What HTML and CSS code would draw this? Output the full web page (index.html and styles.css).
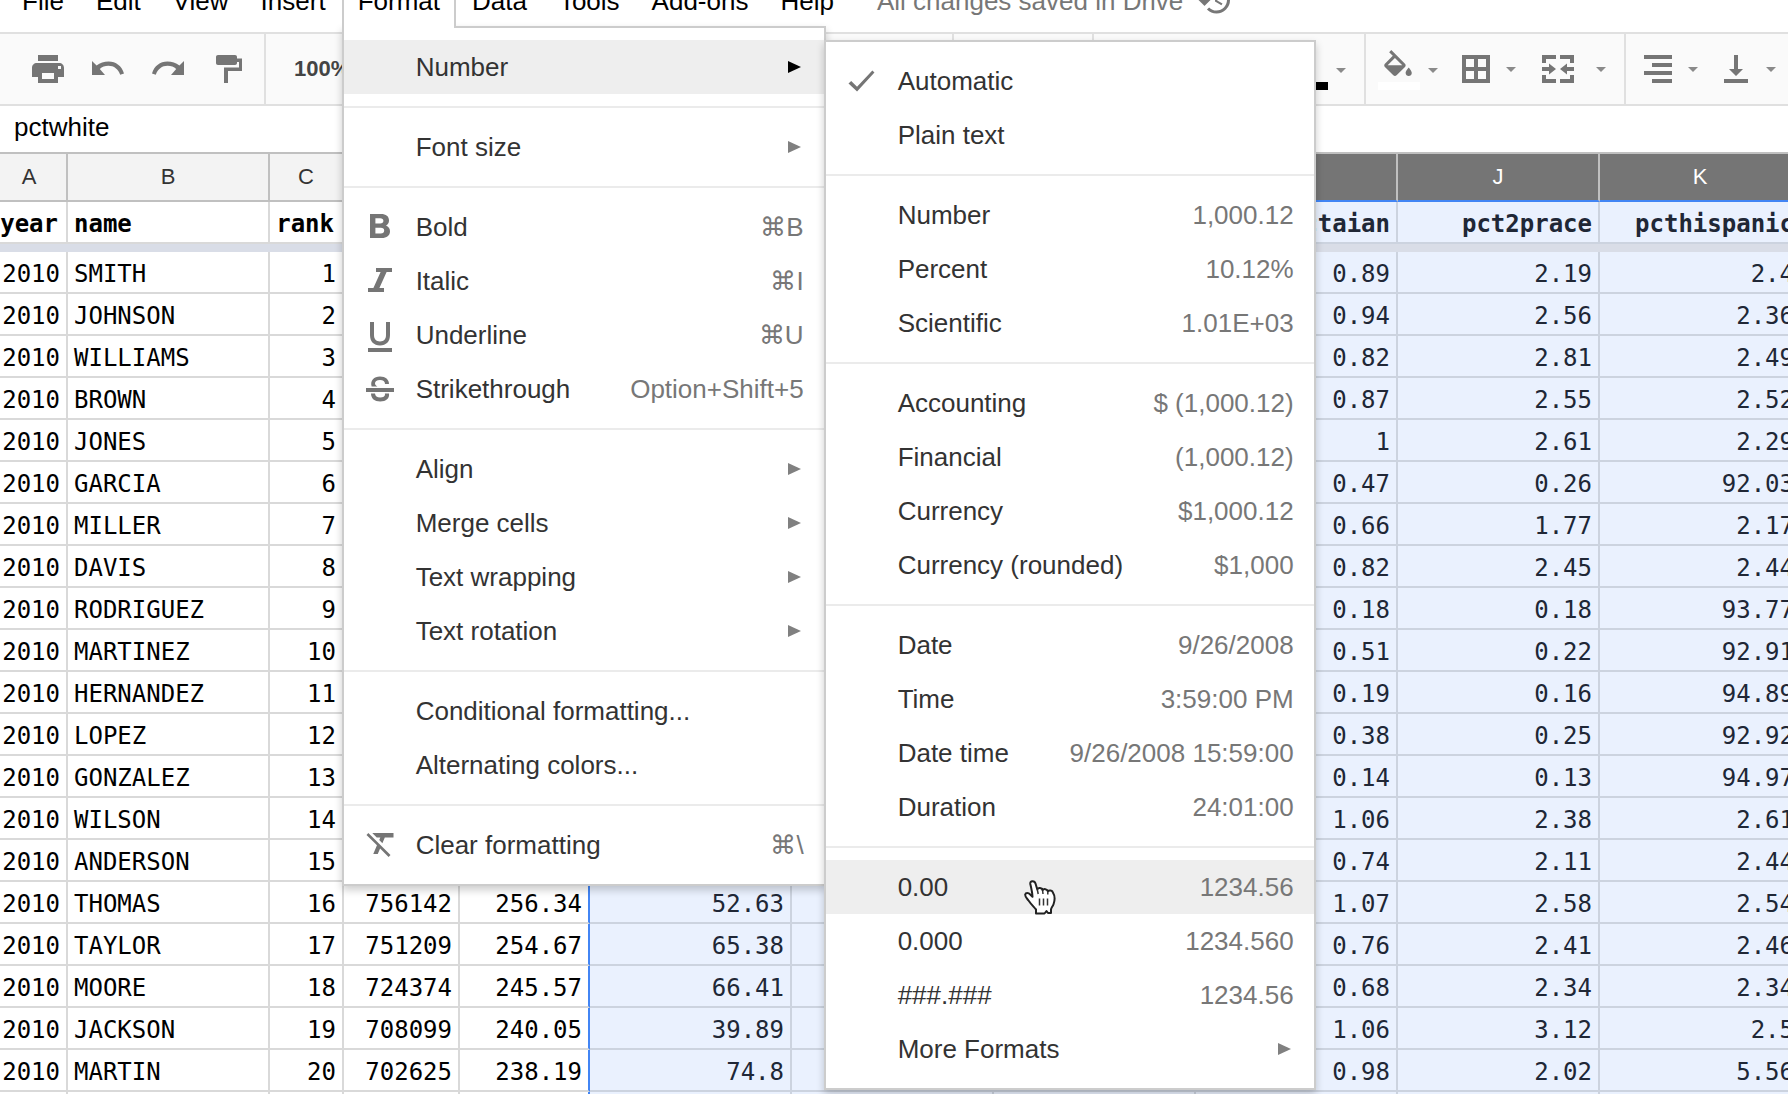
FILE: index.html
```html
<!DOCTYPE html>
<html lang="en">
<head>
<meta charset="utf-8">
<title>Spreadsheet</title>
<link rel="stylesheet" href="styles.css">
</head>
<body>
<div class="app">
  <nav class="menubar">
    <button class="menubar-item">File</button>
    <button class="menubar-item">Edit</button>
    <button class="menubar-item">View</button>
    <button class="menubar-item">Insert</button>
    <div class="menubar-open">
      <button class="menubar-item menubar-tab">Format</button>
      <ul class="menu menu-format">
        <li class="menu-row">
          <button class="item item-active"><span class="label">Number</span><span class="arrow"></span></button>
          <ul class="menu menu-number">
            <li><button class="item"><svg class="icon" viewBox="0 0 24 24"><path d="M8.700 15.800 4.800 12l-1.800 1.600 5.700 5.400L20.300 6.300 18.900 5z"/></svg><span class="label">Automatic</span></button></li>
            <li><button class="item"><span class="label">Plain text</span></button></li>
            <li class="rule"></li>
            <li><button class="item"><span class="label">Number</span><span class="hint">1,000.12</span></button></li>
            <li><button class="item"><span class="label">Percent</span><span class="hint">10.12%</span></button></li>
            <li><button class="item"><span class="label">Scientific</span><span class="hint">1.01E+03</span></button></li>
            <li class="rule"></li>
            <li><button class="item"><span class="label">Accounting</span><span class="hint">$ (1,000.12)</span></button></li>
            <li><button class="item"><span class="label">Financial</span><span class="hint">(1,000.12)</span></button></li>
            <li><button class="item"><span class="label">Currency</span><span class="hint">$1,000.12</span></button></li>
            <li><button class="item"><span class="label">Currency (rounded)</span><span class="hint">$1,000</span></button></li>
            <li class="rule"></li>
            <li><button class="item"><span class="label">Date</span><span class="hint">9/26/2008</span></button></li>
            <li><button class="item"><span class="label">Time</span><span class="hint">3:59:00 PM</span></button></li>
            <li><button class="item"><span class="label">Date time</span><span class="hint">9/26/2008 15:59:00</span></button></li>
            <li><button class="item"><span class="label">Duration</span><span class="hint">24:01:00</span></button></li>
            <li class="rule"></li>
            <li class="menu-row"><button class="item item-active"><span class="label">0.00</span><span class="hint">1234.56</span></button>
              <svg class="pointer" viewBox="0 0 32 35"><path d="M12 33.500v-4C9 26 6.500 23.500 4.500 20.500 2.500 18 .8 16.500 1.200 14.500c.5-2 3.300-2 5 0l2.300 2.300C8.300 12 7 7 6.300 4 5.800.5 10.500.2 11.500 3.500l1.800 6c.7-2 4.700-2 5.300.8.9-1.800 4.700-1.600 5.200 1 1.200-1.500 4.800-1 5.200 1.500 2 3 1.600 8.200.6 11.200-.8 2.500-2.300 3.500-2.600 5.500v3.500h-3l-1.500-2-2 2.500H12z" fill="#fff" stroke="#222" stroke-width="2" stroke-linejoin="round"/><path d="M13.300 9.500l.9 4.500M18.600 10.500l.4 3.500M23.800 11.500v3M15.500 18.500v7M19.500 18.500v7M23.500 18.500v7" fill="none" stroke="#333" stroke-width="1.500"/></svg></li>
            <li><button class="item"><span class="label">0.000</span><span class="hint">1234.560</span></button></li>
            <li><button class="item"><span class="label">###.###</span><span class="hint">1234.56</span></button></li>
            <li><button class="item"><span class="label">More Formats</span><span class="arrow"></span></button></li>
          </ul>
        </li>
        <li class="rule"></li>
        <li><button class="item"><span class="label">Font size</span><span class="arrow"></span></button></li>
        <li class="rule"></li>
        <li><button class="item"><svg class="icon" viewBox="0 -0.5 18 18"><path fill-rule="evenodd" d="M4 2h5.500C12 2 13.500 3.200 13.500 5.200c0 1.200-.6 2-1.500 2.500 1.200.5 2 1.500 2 2.900C14 12.800 12.300 14 9.900 14H4zM6.700 4.100v2.700h2.400c1 0 1.600-.5 1.600-1.400s-.6-1.300-1.600-1.300zM6.700 8.900v2.900h2.700c1.100 0 1.700-.5 1.700-1.500s-.6-1.400-1.700-1.400z"/></svg><span class="label">Bold</span><span class="hint">⌘B</span></button></li>
        <li><button class="item"><svg class="icon" viewBox="0 -0.5 18 18"><path d="M7 2h8v2h-2.700L8.700 12H11v2H3v-2h2.700L9.300 4H7z"/></svg><span class="label">Italic</span><span class="hint">⌘I</span></button></li>
        <li><button class="item"><svg class="icon" viewBox="0 -0.5 18 18"><path d="M4 2h2v6.500c0 2 1 3.200 3 3.200s3-1.200 3-3.200V2h2v6.500c0 3.300-1.900 5.200-5 5.200s-5-1.900-5-5.200zM3 15h12v2H3z"/></svg><span class="label">Underline</span><span class="hint">⌘U</span></button></li>
        <li><button class="item"><svg class="icon" viewBox="0 -0.5 18 18"><path d="M2 8h14v2H2z"/><path d="M4.800 7.200C4 4.300 6 2.300 9 2.300c2.800 0 4.500 1.500 4.500 3.700h-2c0-1.200-.9-2-2.500-2-1.700 0-2.500.7-2.500 1.600 0 .7.400 1.200 1.200 1.600zM4.500 10.700h2c.1 1.300 1 2 2.600 2 1.500 0 2.400-.6 2.400-1.500 0-.2 0-.4-.1-.5h2.100c.4 2.400-1.500 4-4.400 4-2.800 0-4.600-1.500-4.600-4z"/></svg><span class="label">Strikethrough</span><span class="hint">Option+Shift+5</span></button></li>
        <li class="rule"></li>
        <li><button class="item"><span class="label">Align</span><span class="arrow"></span></button></li>
        <li><button class="item"><span class="label">Merge cells</span><span class="arrow"></span></button></li>
        <li><button class="item"><span class="label">Text wrapping</span><span class="arrow"></span></button></li>
        <li><button class="item"><span class="label">Text rotation</span><span class="arrow"></span></button></li>
        <li class="rule"></li>
        <li><button class="item"><span class="label">Conditional formatting...</span></button></li>
        <li><button class="item"><span class="label">Alternating colors...</span></button></li>
        <li class="rule"></li>
        <li><button class="item"><svg class="icon" viewBox="-1 1 24 24"><path d="M3.270 5L2 6.270l6.970 6.970L6.500 19h3l1.570-3.660L16.730 21 18 19.730 3.550 5.270 3.270 5zM6 5v.18L8.820 8h2.400l-.72 1.680 2.100 2.100L14.210 8H20V5H6z"/></svg><span class="label">Clear formatting</span><span class="hint">⌘\</span></button></li>
      </ul>
    </div>
    <button class="menubar-item">Data</button>
    <button class="menubar-item">Tools</button>
    <button class="menubar-item">Add-ons</button>
    <button class="menubar-item">Help</button>
    <span class="save-state">All changes saved in Drive</span>
    <svg class="history" viewBox="0 0 24 24"><path d="M13 3a9 9 0 0 0-9 9H1l3.890 3.890.07.14L9 12H6c0-3.870 3.130-7 7-7s7 3.130 7 7-3.130 7-7 7c-1.930 0-3.680-.79-4.940-2.060l-1.420 1.420A8.950 8.950 0 0 0 13 21a9 9 0 1 0 0-18zm-1 5v5l4.280 2.540.72-1.210-3.500-2.080V8z"/></svg>
  </nav>

  <div class="toolbar">
    <div class="group group-main">
      <button class="tool" aria-label="Print"><svg class="icon" viewBox="0 0 18 18"><path fill-rule="evenodd" d="M4 2h10v3H4zM3.500 6h11C16 6 17 7 17 8.500V13h-3v3H4v-3H1V8.500C1 7 2 6 3.500 6zM6 11v3h6v-3zM14 7.500v1.500h1.500V7.500z"/></svg></button>
      <button class="tool" aria-label="Undo"><svg class="icon" viewBox="0 0 18 18"><path d="M1 5l2.300 2.300C5 6.100 7 5.300 9.300 5.300c3.700 0 6.500 2.200 7.700 5.900l-1.900.7c-.9-2.800-3.100-4.500-5.900-4.500-1.700 0-3.200.6-4.300 1.600L7.500 12H1z"/></svg></button>
      <button class="tool" aria-label="Redo"><svg class="icon" viewBox="0 0 18 18"><path d="M17 5l-2.300 2.300C13 6.100 11 5.300 8.700 5.300 5 5.300 2.200 7.500 1 11.200l1.900.7c.9-2.800 3.100-4.500 5.900-4.500 1.700 0 3.200.6 4.300 1.600L10.500 12H17z"/></svg></button>
      <button class="tool" aria-label="Paint format"><svg class="icon" viewBox="0 0 18 18"><path d="M4 2h8.500c.6 0 1 .4 1 1v.8H16V10H9v6H7V8.300h7.500V5.500h-1V6c0 .6-.4 1-1 1H4c-.6 0-1-.4-1-1V3c0-.6.4-1 1-1z"/></svg></button>
    </div>
    <div class="group group-zoom"><button class="zoom">100%</button></div>
    <div class="group group-font"></div>
    <div class="group group-text">
      <button class="tool tool-color" aria-label="Text color"><span class="swatch swatch-black"></span><span class="caret"></span></button>
    </div>
    <div class="group group-cell">
      <button class="tool tool-color" aria-label="Fill color"><span class="swatch swatch-white"><svg class="bucket" viewBox="3 0 18 17"><path d="M16.560 8.940L7.620 0 6.210 1.410l2.380 2.380-5.150 5.150c-.59.59-.59 1.540 0 2.120l5.500 5.500c.29.29.68.44 1.060.44s.77-.15 1.060-.44l5.500-5.500c.59-.58.59-1.530 0-2.120zM5.210 10L10 5.210 14.790 10H5.210zM19 11.500s-2 2.170-2 3.500c0 1.100.9 2 2 2s2-.9 2-2c0-1.330-2-3.500-2-3.500z"/></svg></span><span class="caret"></span></button>
      <button class="tool" aria-label="Borders"><svg class="icon" viewBox="0 0 18 18"><path fill-rule="evenodd" d="M2 2h14v14H2zM4 4v4h4V4zM10 4v4h4V4zM4 10v4h4v-4zM10 10v4h4v-4z"/></svg><span class="caret"></span></button>
      <button class="tool tool-merge" aria-label="Merge cells"><svg class="icon" viewBox="0 0 18 18"><path d="M1 2h7v2H3v2H1zM10 2h7v4h-2V4h-5zM1 12h2v2h5v2H1zM15 12h2v4h-7v-2h5zM1 8h3.500V6.200L8 9l-3.500 2.800V10H1zM17 8h-3.500V6.200L10 9l3.500 2.800V10H17z"/></svg><span class="caret"></span></button>
    </div>
    <div class="group group-align">
      <button class="tool" aria-label="Horizontal align"><svg class="icon" viewBox="0 0 18 18"><path d="M2 2h14v2H2zM6 6h10v2H6zM2 10h14v2H2zM6 14h10v2H6z"/></svg><span class="caret"></span></button>
      <button class="tool" aria-label="Vertical align"><svg class="icon" viewBox="0 0 18 18"><path d="M8 2h2v7h2.500L9 12.500 5.500 9H8zM3 14h12v2H3z"/></svg><span class="caret"></span></button>
    </div>
  </div>

  <input class="formula" type="text" value="pctwhite" aria-label="Cell content">

  <div class="sheet">
    <table class="grid">
      <colgroup><col class="w-a"><col class="w-wide"><col class="w-c"><col class="w-d"><col class="w-e"><col class="w-wide"><col class="w-wide"><col class="w-wide"><col class="w-wide"><col class="w-wide"><col class="w-wide"></colgroup>
      <thead>
        <tr class="letters"><th>A</th><th>B</th><th>C</th><th>D</th><th>E</th><th>F</th><th>G</th><th>H</th><th>I</th><th>J</th><th>K</th></tr>
        <tr class="names"><td>year</td><td>name</td><td>rank</td><td></td><td></td><td></td><td></td><td></td><td>pctaian</td><td>pct2prace</td><td>pcthispanic</td></tr>
        <tr class="freeze"><td colspan="11"></td></tr>
      </thead>
      <tbody>
        <tr><td>2010</td><td>SMITH</td><td>1</td><td></td><td></td><td></td><td></td><td></td><td>0.89</td><td>2.19</td><td>2.4</td></tr>
        <tr><td>2010</td><td>JOHNSON</td><td>2</td><td></td><td></td><td></td><td></td><td></td><td>0.94</td><td>2.56</td><td>2.36</td></tr>
        <tr><td>2010</td><td>WILLIAMS</td><td>3</td><td></td><td></td><td></td><td></td><td></td><td>0.82</td><td>2.81</td><td>2.49</td></tr>
        <tr><td>2010</td><td>BROWN</td><td>4</td><td></td><td></td><td></td><td></td><td></td><td>0.87</td><td>2.55</td><td>2.52</td></tr>
        <tr><td>2010</td><td>JONES</td><td>5</td><td></td><td></td><td></td><td></td><td></td><td>1</td><td>2.61</td><td>2.29</td></tr>
        <tr><td>2010</td><td>GARCIA</td><td>6</td><td></td><td></td><td></td><td></td><td></td><td>0.47</td><td>0.26</td><td>92.03</td></tr>
        <tr><td>2010</td><td>MILLER</td><td>7</td><td></td><td></td><td></td><td></td><td></td><td>0.66</td><td>1.77</td><td>2.17</td></tr>
        <tr><td>2010</td><td>DAVIS</td><td>8</td><td></td><td></td><td></td><td></td><td></td><td>0.82</td><td>2.45</td><td>2.44</td></tr>
        <tr><td>2010</td><td>RODRIGUEZ</td><td>9</td><td></td><td></td><td></td><td></td><td></td><td>0.18</td><td>0.18</td><td>93.77</td></tr>
        <tr><td>2010</td><td>MARTINEZ</td><td>10</td><td></td><td></td><td></td><td></td><td></td><td>0.51</td><td>0.22</td><td>92.91</td></tr>
        <tr><td>2010</td><td>HERNANDEZ</td><td>11</td><td></td><td></td><td></td><td></td><td></td><td>0.19</td><td>0.16</td><td>94.89</td></tr>
        <tr><td>2010</td><td>LOPEZ</td><td>12</td><td></td><td></td><td></td><td></td><td></td><td>0.38</td><td>0.25</td><td>92.92</td></tr>
        <tr><td>2010</td><td>GONZALEZ</td><td>13</td><td></td><td></td><td></td><td></td><td></td><td>0.14</td><td>0.13</td><td>94.97</td></tr>
        <tr><td>2010</td><td>WILSON</td><td>14</td><td></td><td></td><td></td><td></td><td></td><td>1.06</td><td>2.38</td><td>2.61</td></tr>
        <tr><td>2010</td><td>ANDERSON</td><td>15</td><td></td><td></td><td></td><td></td><td></td><td>0.74</td><td>2.11</td><td>2.44</td></tr>
        <tr><td>2010</td><td>THOMAS</td><td>16</td><td>756142</td><td>256.34</td><td>52.63</td><td></td><td></td><td>1.07</td><td>2.58</td><td>2.54</td></tr>
        <tr><td>2010</td><td>TAYLOR</td><td>17</td><td>751209</td><td>254.67</td><td>65.38</td><td></td><td></td><td>0.76</td><td>2.41</td><td>2.46</td></tr>
        <tr><td>2010</td><td>MOORE</td><td>18</td><td>724374</td><td>245.57</td><td>66.41</td><td></td><td></td><td>0.68</td><td>2.34</td><td>2.34</td></tr>
        <tr><td>2010</td><td>JACKSON</td><td>19</td><td>708099</td><td>240.05</td><td>39.89</td><td></td><td></td><td>1.06</td><td>3.12</td><td>2.5</td></tr>
        <tr><td>2010</td><td>MARTIN</td><td>20</td><td>702625</td><td>238.19</td><td>74.8</td><td></td><td></td><td>0.98</td><td>2.02</td><td>5.56</td></tr>
        <tr><td></td><td></td><td></td><td></td><td></td><td></td><td></td><td></td><td></td><td></td><td></td></tr>
      </tbody>
    </table>
  </div>
</div>
</body>
</html>
```
FILE: styles.css
```css
* { box-sizing: border-box; }

body {
  margin: 0;
  background: #fff;
  font-family: "Liberation Sans", Arial, sans-serif;
  font-size: 26px;
  color: #000;
}

button {
  margin: 0;
  padding: 0;
  border: 0;
  background: none;
  font: inherit;
  color: inherit;
}

.app { height: 100vh; overflow: hidden; }

/* Menu bar: scrolled half out of the top of the window */
.menubar {
  display: flex;
  height: 62px;
  margin-top: -28px;
  padding-left: 6px;
  border-bottom: 2px solid #e0e0e0;
}

.menubar-item { height: 56px; padding: 0 16px; line-height: 58px; }
.menubar-open { position: relative; }

.menubar-tab {
  position: relative;
  z-index: 3;
  padding: 0 14px;
  border: 2px solid #ccc;
  border-width: 0 2px;
  background: #fff;
}

.save-state { margin-left: 27px; line-height: 58px; color: #777; }
.history { width: 36px; height: 36px; margin: 10px 0 0 14px; fill: #777; }

/* Drop-down menus */
.menu {
  position: absolute;
  margin: 0;
  padding: 12px 0;
  border: 2px solid #ccc;
  background: #fff;
  box-shadow: 0 4px 8px rgba(0, 0, 0, .2);
  list-style: none;
}

.menu-format { top: 54px; left: 0; z-index: 2; width: 484px; }
.menu-number { top: 0; left: 100%; z-index: 4; width: 492px; }
.menu-row { position: relative; }

.item {
  display: flex;
  align-items: center;
  width: 100%;
  height: 54px;
  padding: 0 20px 0 18px;
  color: #333;
  text-align: left;
  white-space: nowrap;
}

.item-active { background: #eee; }
.item .label { flex: 1; margin-left: 54px; }
.item .icon + .label { margin-left: 18px; }
.hint { color: #777; }
.icon { display: block; flex: none; width: 36px; height: 36px; fill: #757575; }

.arrow {
  margin-right: 3px;
  border: 6px solid transparent;
  border-width: 6px 0 6px 13px;
  border-left-color: #808080;
}
.item-active .arrow { border-left-color: #000; }

.rule { height: 2px; margin: 12px 0; background: #ebebeb; }

.pointer { position: absolute; top: 20px; left: 198px; width: 32px; height: 35px; }

/* Toolbar */
.toolbar {
  display: flex;
  height: 72px;
  border-bottom: 2px solid #e0e0e0;
  background: #fafafa;
}

.group {
  display: flex;
  flex: none;
  align-items: center;
  gap: 20px;
  border-right: 2px solid #e0e0e0;
}

.group-main { gap: 24px; width: 266px; padding-left: 30px; }
.group-zoom { width: 688px; padding-left: 28px; }
.group-font { width: 140px; }
.group-text { justify-content: flex-end; width: 272px; padding-right: 18px; }
.group-cell { width: 260px; padding-left: 12px; }
.group-align { flex: 1; padding-left: 14px; border-right: 0; }

.zoom { font-size: 22px; font-weight: bold; color: #444; }

.tool { display: flex; align-items: center; gap: 12px; }
.tool-merge { gap: 20px; margin-left: 4px; }
.tool-color { gap: 8px; padding-top: 2px; }

.caret {
  border: 5px solid transparent;
  border-width: 5px 5px 0;
  border-top-color: #8a8a8a;
}

.swatch {
  display: block;
  width: 42px;
  height: 40px;
  padding: 0 6px;
  border-bottom: 8px solid #000;
}
.swatch-white { border-color: #fff; }
.bucket { display: block; width: 28px; height: 26px; fill: #757575; }

.formula {
  display: block;
  width: 100%;
  height: 48px;
  padding: 0 0 4px 14px;
  border: 0;
  border-bottom: 2px solid #c0c0c0;
  outline: 0;
  background: #fff;
  font: inherit;
  color: #000;
}

/* Cells: the grid is scrolled a few pixels to the right */
.sheet { overflow: hidden; }

.grid {
  width: 1810px;
  margin-left: -8px;
  border-spacing: 0;
  table-layout: fixed;
  font-family: "DejaVu Sans Mono", monospace;
  font-size: 24px;
  line-height: 36px;
}

.w-a { width: 76px; }
.w-c { width: 74px; }
.w-d { width: 116px; }
.w-e { width: 130px; }
.w-wide { width: 202px; }

.grid td {
  height: 42px;
  padding: 4px 6px 0;
  border: solid #d9d9d9;
  border-width: 0 2px 2px 0;
  text-align: right;
  white-space: nowrap;
}
.grid td:nth-child(2) { text-align: left; }

.grid td:nth-child(5) { border-right-color: #4285f4; }
.grid td:nth-child(n+6) {
  border-color: #ccd3df;
  background: #eaf1fe;
  color: #202736;
}

.grid .letters th {
  height: 48px;
  padding: 0;
  border: solid #c0c0c0;
  border-width: 0 2px 2px 0;
  background: #f3f3f3;
  font: 22px/46px "Liberation Sans", Arial, sans-serif;
  color: #333;
}
.grid .letters th:nth-child(n+6) {
  border-bottom-color: #4285f4;
  background: #757575;
  color: #fff;
}

.grid .names td { font-weight: bold; }
.grid .names td:nth-child(-n+3) { padding-right: 8px; }
.grid .freeze td { height: 8px; padding: 0; border: 0; background: #d9dde7; line-height: 0; }
```
